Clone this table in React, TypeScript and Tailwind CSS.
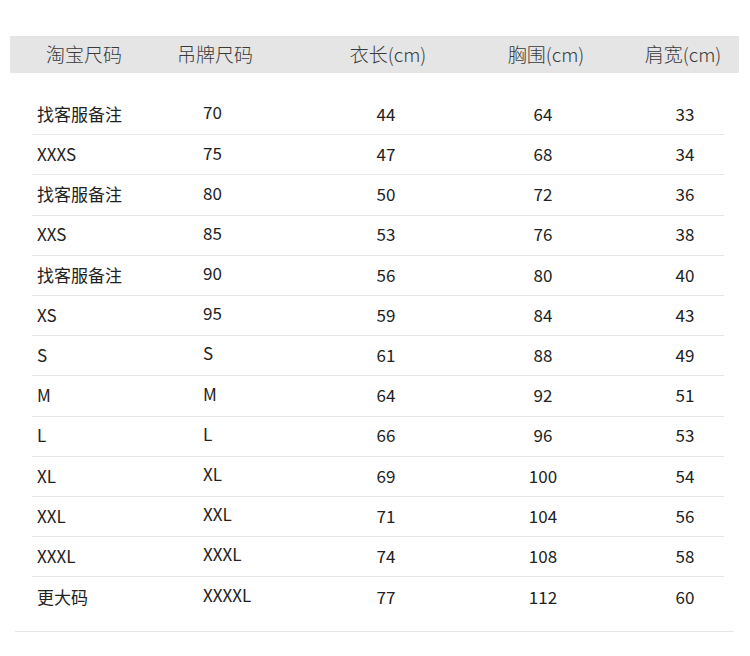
const rows: [string, string, string, string, string][] = [
  ["找客服备注", "70", "44", "64", "33"],
  ["XXXS", "75", "47", "68", "34"],
  ["找客服备注", "80", "50", "72", "36"],
  ["XXS", "85", "53", "76", "38"],
  ["找客服备注", "90", "56", "80", "40"],
  ["XS", "95", "59", "84", "43"],
  ["S", "S", "61", "88", "49"],
  ["M", "M", "64", "92", "51"],
  ["L", "L", "66", "96", "53"],
  ["XL", "XL", "69", "100", "54"],
  ["XXL", "XXL", "71", "104", "56"],
  ["XXXL", "XXXL", "74", "108", "58"],
  ["更大码", "XXXXL", "77", "112", "60"],
];

export default function App() {
  return (
    <div
      className="w-[750px] h-[656px] bg-white pt-[36px] text-[#222]"
      style={{ fontFamily: '"Noto Sans CJK SC", "Noto Sans", sans-serif' }}
    >
      {/* header bar */}
      <div className="ml-[10px] flex h-[37px] w-[729px] items-center bg-[#e5e5e5] text-[19px] font-light text-[#3a3a3a]">
        <div className="ml-[24px] w-[100px] text-center">淘宝尺码</div>
        <div className="ml-[31px] w-[100px] text-center">吊牌尺码</div>
        <div className="ml-[73px] w-[100px] text-center">衣长(cm)</div>
        <div className="ml-[58px] w-[100px] text-center">胸围(cm)</div>
        <div className="ml-[37px] w-[100px] text-center">肩宽(cm)</div>
      </div>

      <div className="ml-[32px] mt-[22px] w-[692px] text-[17px]">
        {rows.map((r, i) => (
          <div
            key={i}
            className={`grid h-[40.2px] grid-cols-[171px_105px_156px_158px_102px] items-center ${
              i < rows.length - 1 ? "border-b border-[#e6e6e6]" : ""
            }`}
          >
            <div className="pb-[2px] pl-[5px]">{r[0]}</div>
            <div className="pb-[5px]">{r[1]}</div>
            <div className="pb-[2px] text-center">{r[2]}</div>
            <div className="pb-[2px] text-center">{r[3]}</div>
            <div className="pb-[2px] pl-[24px] text-center">{r[4]}</div>
          </div>
        ))}
      </div>

      <div className="ml-[15px] mt-[14px] w-[719px] border-t border-[#e6e6e6]" />
    </div>
  );
}
